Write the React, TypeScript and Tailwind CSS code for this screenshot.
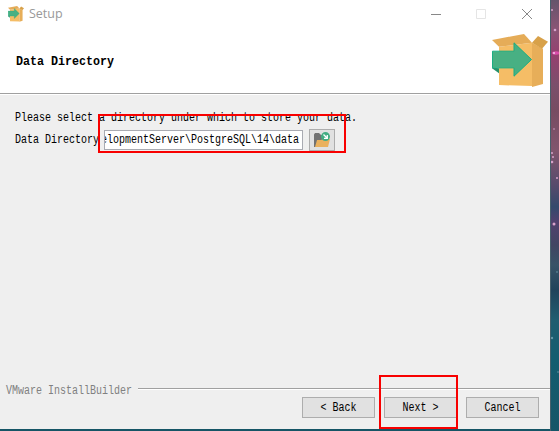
import React from "react";

const mono =
  "font-['Liberation_Mono','Noto_Sans_CJK_SC',monospace] whitespace-pre";

function Label({ children, className = "" }: { children: string; className?: string }) {
  return (
    <span
      className={`${mono} inline-block origin-center translate-y-px scale-y-[1.2] text-[10px] leading-[12px] ${className}`}
    >
      {children}
    </span>
  );
}

function BoxIcon({ className }: { className: string }) {
  return (
    <svg viewBox="0 0 56 55" className={className} preserveAspectRatio="none">
      <path d="M7 13L40 9V53L7 52Z" fill="#f5bd66" />
      <path d="M40 9L51 15V51L40 54Z" fill="#e7ae59" />
      <path d="M0 6L32 0L40 9L7 13Z" fill="#e5ac58" />
      <path d="M40 9L46 2L56 8L50 15Z" fill="#d8a149" />
      <path d="M0 34L7 35V40L0 35Z" fill="#27906a" />
      <path d="M.5 17.5H22V9L39.5 26L22 43V34.5H.5Z" fill="#48b083" stroke="#18ad83" />
    </svg>
  );
}

function FolderIcon() {
  return (
    <svg viewBox="0 0 18 16" className="h-4 w-[18px]">
      <path d="M1 15V2.5L2 1H6L8 3H14V15Z" fill="#727272" />
      <path d="M2 15L4 8H8L10 7H17L15 15Z" fill="#eab15d" />
      <circle cx="12.5" cy="4.6" r="4.5" fill="#43ad83" />
      <path d="M10.5 2.5L14 6M14.3 3V6.4H11" fill="none" stroke="#fff" strokeWidth="1.3" />
    </svg>
  );
}

function Button({ children }: { children: string }) {
  return (
    <button className="flex h-[21px] w-[73px] items-center justify-center border border-[#adadad] bg-[#e1e1e1] text-black">
      <Label>{children}</Label>
    </button>
  );
}

function TitleBar() {
  return (
    <div className="flex h-[27px] items-center pl-2">
      <BoxIcon className="h-4 w-4" />
      <span className="ml-[5px] font-['Open_Sans','Noto_Sans',sans-serif] text-[12.5px] leading-4 text-[#999]">
        Setup
      </span>
      <svg viewBox="0 0 102 12" className="mr-[17px] ml-auto h-3 w-[102px]" fill="none">
        <path d="M0 6.5H10" stroke="#888" />
        <path d="M45.5 1.5H54.5V10.5H45.5Z" stroke="#e5e5e5" />
        <path d="M91 1L101 11M101 1L91 11" stroke="#888" />
      </svg>
    </div>
  );
}

export default function App() {
  return (
    <div className="relative h-[431px] w-[559px] overflow-hidden bg-[#165566]">
      <div className="grid h-full w-full grid-cols-[550px_9px]">
        <div className="flex h-[429px] flex-col bg-[#efefef]">
          <header className="h-[93px] shrink-0 bg-white">
            <TitleBar />
            <div className="flex h-[66px] items-start justify-between pl-4">
              <span
                className={`${mono} mt-[29px] inline-block origin-center scale-y-[1.12] text-[11.67px] leading-[13px] font-bold text-black`}
              >
                Data Directory
              </span>
              <BoxIcon className="mt-[7px] mr-[2px] h-[54px] w-14" />
            </div>
          </header>
          <div className="h-[2px] shrink-0 border-t border-[#a0a0a0] bg-white" />
          <main className="flex h-[293px] shrink-0 flex-col pt-[16px] pl-[15px]">
            <div className="flex h-[13px] items-center">
              <Label>Please select a directory under which to store your data.</Label>
            </div>
            <div className="mt-[5px] flex h-[22px] items-center">
              <Label className="w-[89px]">Data Directory</Label>
              <div className="flex h-5 w-[199px] items-center justify-end overflow-hidden border border-[#a9abb2] bg-white pr-[3px]">
                <Label>elopmentServer\PostgreSQL\14\data</Label>
              </div>
              <button className="ml-[6px] flex h-[22px] w-[26px] items-center justify-center border border-[#adadad] bg-[#e1e1e1]">
                <FolderIcon />
              </button>
            </div>
          </main>
          <footer>
            <div className="flex h-[7px] items-start pl-[6px]">
              <Label className="-mt-[3px] w-[132px] shrink-0 text-[#808080]">VMware InstallBuilder</Label>
              <div className="h-[2px] flex-1 border-t border-[#a0a0a0] bg-white" />
            </div>
            <div className="mt-[2px] flex justify-end gap-[9px] pr-[11px]">
              <Button>{"< Back"}</Button>
              <Button>{"Next >"}</Button>
              <Button>Cancel</Button>
            </div>
          </footer>
        </div>
        <div className="h-full border-l border-[#47606b] bg-[linear-gradient(180deg,#65546b_0px,#895575_28px,#95406f_55px,#7b4f6b_85px,#774c62_110px,#81556d_150px,#574b6c_185px,#34496c_207px,#51416e_222px,#414562_245px,#385367_265px,#20435b_290px,#205d70_320px,#145d70_360px,#165567_431px)]">
          <svg viewBox="0 0 8 431" className="h-[431px] w-2">
            <g fill="#d6a2ca">
              <circle cx="4" cy="30" r="1.3" />
              <circle cx="1" cy="10" r="1" />
              <ellipse cx="5" cy="53" rx="4" ry="1.8" fill="#da4caa" />
              <circle cx="3" cy="53" r="1" fill="#f4c8e7" />
              <circle cx="1" cy="153" r="1" />
              <circle cx="2" cy="157" r="1" />
              <circle cx="1" cy="162" r="1.3" />
              <circle cx="3" cy="129" r=".8" />
              <circle cx="6" cy="178" r="1" />
              <circle cx="3" cy="224" r="1.5" />
            </g>
            <g fill="#6799a8">
              <circle cx="1" cy="338" r="1.2" />
              <circle cx="6" cy="272" r=".8" />
              <circle cx="7" cy="372" r=".8" />
            </g>
          </svg>
        </div>
      </div>
      <div className="absolute top-[114px] left-[98px] h-[39px] w-[248px] border-2 border-[#f80000]" />
      <div className="absolute top-[375px] left-[379px] h-[54px] w-[79px] border-2 border-[#f80000]" />
    </div>
  );
}
